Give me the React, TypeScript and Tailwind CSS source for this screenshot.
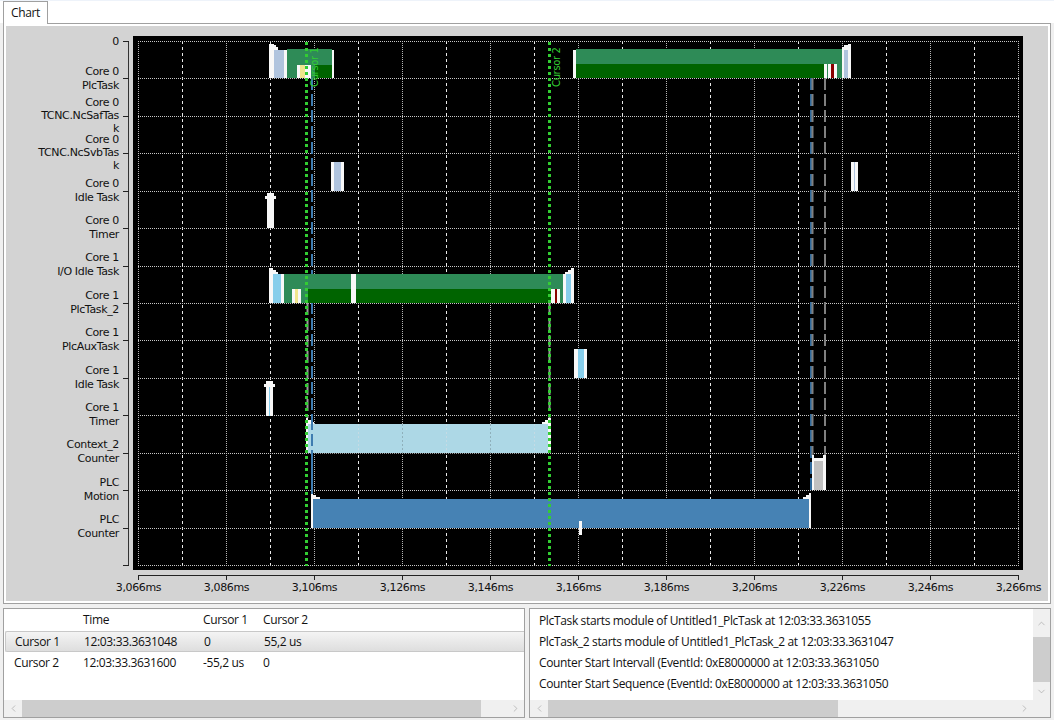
import { ChevronDown, ChevronLeft, ChevronRight, ChevronUp } from 'lucide-react';

type Bar = [number, number, number, number, string];

const SEA = '#2e8b57';
const DARK = '#006400';
const STEEL = '#b0c4de';
const SKY = '#87ceeb';
const KHAKI = '#f0e68c';
const RED = '#8b0000';
const W = '#f8f8f8';

const rowTicks = Array.from({ length: 15 }, (_, i) => Math.round(41 + i * 37.43));
const timeLabels = ['3,066ms', '3,086ms', '3,106ms', '3,126ms', '3,146ms', '3,166ms', '3,186ms', '3,206ms', '3,226ms', '3,246ms', '3,266ms'];

const rowLabels: [number, string[]][] = [
  [78, ['Core 0', 'PlcTask']],
  [115, ['Core 0', 'TCNC.NcSafTas', 'k']],
  [152, ['Core 0', 'TCNC.NcSvbTas', 'k']],
  [190, ['Core 0', 'Idle Task']],
  [227, ['Core 0', 'Timer']],
  [264, ['Core 1', 'I/O Idle Task']],
  [302, ['Core 1', 'PlcTask_2']],
  [339, ['Core 1', 'PlcAuxTask']],
  [377, ['Core 1', 'Idle Task']],
  [414, ['Core 1', 'Timer']],
  [451, ['Context_2', 'Counter']],
  [489, ['PLC', 'Motion']],
  [526, ['PLC', 'Counter']],
];

// x0, x1, y0, y1, colour, in page pixels
const bars: Bar[] = [
  // Core 0 PlcTask, first run
  [269, 274, 44, 78, W],
  [274, 276, 45, 50, W],
  [276, 278, 47, 50, W],
  [274, 284, 50, 78, STEEL],
  [284, 287, 50, 78, W],
  [287, 332, 49, 65, SEA],
  [287, 297, 65, 78, SEA],
  [297, 300, 65, 78, W],
  [300, 305, 65, 78, KHAKI],
  [305, 311, 65, 78, W],
  [311, 315, 65, 78, SEA],
  [315, 332, 65, 78, DARK],
  [332, 334, 50, 78, W],
  // Core 0 PlcTask, second run
  [573, 576, 50, 78, W],
  [576, 842, 49, 64, SEA],
  [576, 824, 64, 78, DARK],
  [824, 827, 64, 78, W],
  [827, 828, 64, 78, SEA],
  [828, 831, 64, 78, W],
  [831, 834, 64, 78, RED],
  [834, 837, 64, 78, W],
  [837, 842, 64, 78, SEA],
  [842, 844, 50, 78, W],
  [844, 848, 50, 78, STEEL],
  [848, 851, 44, 78, W],
  [842, 844, 47, 50, W],
  [844, 848, 45, 50, W],
  // Core 0 idle
  [331, 334, 162, 191, W],
  [334, 341, 162, 191, STEEL],
  [341, 344, 162, 191, W],
  [851, 858, 162, 191, W],
  [854, 855, 162, 191, STEEL],
  // Core 0 timer
  [267, 274, 193, 196, W],
  [265, 276, 196, 199, W],
  [267, 274, 199, 228, W],
  // Core 1 PlcTask_2
  [269, 273, 268, 303, W],
  [273, 276, 270, 274, W],
  [276, 278, 272, 274, W],
  [273, 281, 274, 303, SKY],
  [281, 284, 274, 303, W],
  [284, 351, 274, 289, SEA],
  [284, 292, 289, 303, SEA],
  [292, 295, 289, 303, W],
  [295, 298, 289, 303, KHAKI],
  [298, 301, 289, 303, W],
  [301, 308, 289, 303, SEA],
  [308, 351, 289, 303, DARK],
  [351, 356, 274, 303, W],
  [356, 563, 274, 289, SEA],
  [356, 551, 289, 303, DARK],
  [551, 555, 289, 303, W],
  [555, 557, 289, 303, RED],
  [557, 560, 289, 303, W],
  [560, 563, 289, 303, SEA],
  [563, 566, 274, 303, W],
  [566, 571, 274, 303, SKY],
  [571, 574, 268, 303, W],
  [565, 568, 272, 274, W],
  [568, 571, 270, 274, W],
  // Core 1 idle
  [574, 578, 349, 378, W],
  [578, 584, 349, 378, SKY],
  [584, 587, 349, 378, W],
  // Core 1 timer
  [266, 273, 381, 384, W],
  [264, 275, 384, 387, W],
  [266, 273, 387, 416, W],
  [269, 270, 387, 416, SKY],
  // Context_2 counter
  [306, 308, 418, 453, W],
  [308, 311, 420, 424, W],
  [311, 314, 422, 424, W],
  [308, 548, 424, 453, '#add8e6'],
  [548, 551, 418, 453, W],
  [545, 548, 420, 424, W],
  [542, 545, 422, 424, W],
  // PLC motion
  [812, 814, 455, 490, W],
  [814, 823, 458, 461, W],
  [814, 823, 461, 490, '#c0c0c0'],
  [823, 826, 455, 490, W],
  // PLC counter
  [311, 313, 494, 528, W],
  [313, 316, 495, 499, W],
  [316, 320, 497, 499, W],
  [313, 809, 499, 528, '#4682b4'],
  [809, 811, 493, 528, W],
  [806, 809, 495, 499, W],
  [803, 806, 497, 499, W],
  [579, 582, 521, 535, W],
];

function ChartPlot() {
  return (
    <svg width={1042} height={575} viewBox="6 26 1042 575" className="block font-['DejaVu_Sans',sans-serif] text-[11px]">
      <rect x={133} y={36} width={890} height={534} fill="#000" />

      {Array.from({ length: 21 }, (_, i) => {
        const x = 138.5 + i * 44;
        return i % 2 === 0 ? (
          <line key={i} x1={x} x2={x} y1={41} y2={565} stroke="#b4b4b4" strokeDasharray="1 1" />
        ) : (
          <line key={i} x1={x} x2={x} y1={41} y2={565} stroke="#e8e8e8" strokeDasharray="3 3" />
        );
      })}
      {rowTicks.map((y) => (
        <line key={y} x1={138} x2={1019} y1={y + 0.5} y2={y + 0.5} stroke="#c8c8c8" strokeDasharray="1 1" />
      ))}

      {/* task connectors */}
      <line x1={312} x2={312} y1={78} y2={494} stroke="#3f7cb0" strokeWidth={2} strokeDasharray="12 4" />
      <line x1={811} x2={811} y1={78} y2={494} stroke="#2f6a9c" strokeWidth={2} strokeDasharray="12 4" />
      <line x1={812.5} x2={812.5} y1={78} y2={456} stroke="#808080" strokeWidth={2} strokeDasharray="12 4" />
      <line x1={825} x2={825} y1={78} y2={456} stroke="#808080" strokeWidth={2} strokeDasharray="12 4" />
      <line x1={307.5} x2={307.5} y1={303} y2={418} stroke="#9a9a9a" strokeWidth={2} strokeDasharray="12 4" />
      <line x1={549.5} x2={549.5} y1={303} y2={418} stroke="#9a9a9a" strokeWidth={2} strokeDasharray="12 4" />

      {bars.map(([x0, x1, y0, y1, c], i) => (
        <rect key={i} x={x0} y={y0} width={x1 - x0} height={y1 - y0} fill={c} shapeRendering="crispEdges" />
      ))}

      {/* grid shows through the light counter bar */}
      {[358.5, 402.5, 446.5, 490.5, 534.5].map((x, i) => (
        <line key={x} x1={x} x2={x} y1={424} y2={453} stroke={i % 2 === 0 ? '#c4dbe4' : '#8fb0bb'} strokeDasharray="2 2" />
      ))}
      <line x1={308} x2={548} y1={453.5} y2={453.5} stroke="#9a9a9a" strokeDasharray="1 1" />
      <line x1={312} x2={312} y1={418} y2={494} stroke="#3f7cb0" strokeWidth={2} strokeDasharray="12 4" />

      {/* cursors */}
      <line x1={306.5} x2={306.5} y1={42} y2={566} stroke="#32cd32" strokeWidth={3} strokeDasharray="3 3" />
      <line x1={549.5} x2={549.5} y1={42} y2={566} stroke="#32cd32" strokeWidth={3} strokeDasharray="3 3" />
      <text transform="translate(318 87) rotate(-90)" fill="#32cd32" className="text-[10px]">Cursor 1</text>
      <text transform="translate(560 87) rotate(-90)" fill="#32cd32" className="text-[10px]">Cursor 2</text>

      {/* row axis */}
      <line x1={128.5} x2={128.5} y1={41} y2={566} stroke="#333" />
      {rowTicks.map((y) => (
        <line key={y} x1={123} x2={129} y1={y + 0.5} y2={y + 0.5} stroke="#222" />
      ))}
      <text x={119} y={45} textAnchor="end" fill="#111">0</text>
      {rowLabels.map(([center, lines]) => (
        <text key={center} textAnchor="end" fill="#111">
          {lines.map((line, i) => (
            <tspan key={i} x={119} y={center + 4 + (i - (lines.length - 1) / 2) * 13.3}>
              {line}
            </tspan>
          ))}
        </text>
      ))}

      {/* time axis */}
      <line x1={138} x2={1019} y1={575.5} y2={575.5} stroke="#222" />
      {timeLabels.map((label, i) => {
        const x = 138.5 + i * 88;
        return (
          <g key={label}>
            <line x1={x} x2={x} y1={575} y2={580} stroke="#222" />
            <text x={x} y={591} textAnchor="middle" fill="#111">{label}</text>
          </g>
        );
      })}
    </svg>
  );
}

function HScroll({ before, thumb, corner }: { before: string; thumb: string; corner?: boolean }) {
  return (
    <div className="flex h-[17px] shrink-0">
      <div className="flex flex-1 items-center bg-[#f0f0f0]">
        <div className={`flex h-full items-center justify-center ${before}`}>
          <ChevronLeft size={11} strokeWidth={1.5} className="text-[#a6a6a6]" />
        </div>
        <div className={`h-full bg-[#cdcdcd] ${thumb}`} />
        <div className="flex-1" />
        <div className="flex h-full w-[17px] items-center justify-center">
          <ChevronRight size={11} strokeWidth={1.5} className="text-[#a6a6a6]" />
        </div>
      </div>
      {corner && <div className="w-[17px] bg-[#f0f0f0]" />}
    </div>
  );
}

const cursorRows = [
  ['Cursor 1', '12:03:33.3631048', '0', '55,2 us'],
  ['Cursor 2', '12:03:33.3631600', '-55,2 us', '0'],
];

const messages = [
  'PlcTask starts module of Untitled1_PlcTask at 12:03:33.3631055',
  'PlcTask_2 starts module of Untitled1_PlcTask_2 at 12:03:33.3631047',
  'Counter Start Intervall (EventId: 0xE8000000 at 12:03:33.3631050',
  'Counter Start Sequence (EventId: 0xE8000000 at 12:03:33.3631050',
];

export default function App() {
  return (
    <div className="flex h-[720px] w-[1054px] flex-col overflow-hidden bg-[#f0f0f0] font-['Open_Sans',sans-serif] text-[12px] tracking-[-0.35px] text-[#111]">
      <div className="flex h-[23px] shrink-0 items-start border-t border-[#eef3fa] bg-white pl-[3px]">
        <div className="relative z-10 flex h-[23px] w-[45px] items-center justify-center border-x border-t border-[#a0a0a0] bg-white">
          Chart
        </div>
      </div>

      <div className="ml-[3px] h-[581px] w-[1048px] shrink-0 border border-[#a0a0a0] bg-white p-[2px]">
        <div className="bg-[#d3d3d3]">
          <ChartPlot />
        </div>
      </div>

      <div className="mt-[4px] flex h-[110px] gap-[4px] px-[3px]">
        <div className="flex w-[522px] flex-col border border-[#a0a0a0] bg-white">
          <div className="flex-1">
            <div className="grid h-[22px] grid-cols-[69px_120px_60px_1fr] items-center pl-[10px]">
              <span />
              <span>Time</span>
              <span>Cursor 1</span>
              <span>Cursor 2</span>
            </div>
            {cursorRows.map((row, i) => (
              <div
                key={row[0]}
                className={`ml-px grid h-[21px] grid-cols-[69px_120px_60px_1fr] items-center pl-[9px] ${
                  i === 0 ? 'rounded-l-[2px] border border-r-0 border-[#c8c8c8] bg-gradient-to-b from-[#f4f4f4] to-[#dedede]' : ''
                }`}
              >
                {row.map((cell, j) => (
                  <span key={j}>{cell}</span>
                ))}
              </div>
            ))}
          </div>
          <HScroll before="w-[18px]" thumb="w-[459px]" />
        </div>

        <div className="flex w-[522px] flex-col border border-[#a0a0a0] bg-white">
          <div className="flex min-h-0 flex-1">
            <div className="flex-1 pl-[9px] pt-[1px]">
              {messages.map((m) => (
                <div key={m} className="flex h-[21px] items-center whitespace-nowrap">
                  {m}
                </div>
              ))}
            </div>
            <div className="flex w-[17px] flex-col bg-[#f0f0f0]">
              <div className="flex h-[28px] items-center justify-center">
                <ChevronUp size={11} strokeWidth={1.5} className="text-[#a6a6a6]" />
              </div>
              <div className="h-[45px] bg-[#cdcdcd]" />
              <div className="flex-1" />
              <div className="flex h-[17px] items-center justify-center">
                <ChevronDown size={11} strokeWidth={1.5} className="text-[#a6a6a6]" />
              </div>
            </div>
          </div>
          <HScroll before="w-[18px]" thumb="w-[290px]" corner />
        </div>
      </div>
    </div>
  );
}
